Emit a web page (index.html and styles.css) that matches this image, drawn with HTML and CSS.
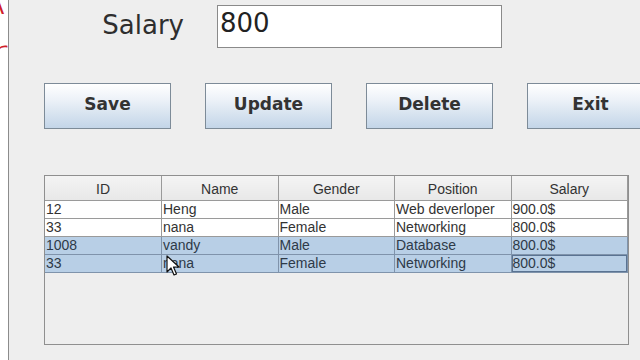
FILE: index.html
```html
<!DOCTYPE html>
<html lang="en">
<head>
    <meta charset="UTF-8">
    <meta name="viewport" content="width=device-width, initial-scale=1.0">
    <title>Employee Form</title>
    <link rel="stylesheet" href="styles.css">
</head>
<body>
    <div class="window">
        <div class="side-strip">
            <span class="ink ink-top">A</span>
            <span class="ink ink-mid">r</span>
        </div>

        <div class="form-panel">
            <div class="field-row">
                <label class="field-label" for="salary">Salary</label>
                <input type="text" id="salary" class="field-input" value="800">
            </div>

            <div class="button-row">
                <button class="action-btn">Save</button>
                <button class="action-btn">Update</button>
                <button class="action-btn">Delete</button>
                <button class="action-btn">Exit</button>
            </div>

            <div class="table-box">
                <table class="emp-table">
                    <thead>
                        <tr>
                            <th>ID</th>
                            <th>Name</th>
                            <th>Gender</th>
                            <th>Position</th>
                            <th>Salary</th>
                        </tr>
                    </thead>
                    <tbody>
                        <tr>
                            <td>12</td>
                            <td>Heng</td>
                            <td>Male</td>
                            <td>Web deverloper</td>
                            <td>900.0$</td>
                        </tr>
                        <tr>
                            <td>33</td>
                            <td>nana</td>
                            <td>Female</td>
                            <td>Networking</td>
                            <td>800.0$</td>
                        </tr>
                        <tr class="selected">
                            <td>1008</td>
                            <td>vandy</td>
                            <td>Male</td>
                            <td>Database</td>
                            <td>800.0$</td>
                        </tr>
                        <tr class="selected">
                            <td>33</td>
                            <td>nana</td>
                            <td>Female</td>
                            <td>Networking</td>
                            <td class="focused">800.0$</td>
                        </tr>
                    </tbody>
                </table>
            </div>
        </div>

        <!-- mouse pointer over the last row -->
        <svg class="cursor" width="14" height="22" viewBox="0 0 14 22">
            <path d="M1 1 L1 17 L5 13 L8 20 L10.5 19 L7.5 12 L13 12 Z" fill="#ffffff" stroke="#111111" stroke-width="1.2" stroke-linejoin="round"/>
        </svg>
    </div>
</body>
</html>
```

FILE: styles.css
```css
body {
    margin: 0;
    padding: 0;
    background-color: #eeeeee;
    font-family: 'DejaVu Sans', 'Open Sans', sans-serif;
    overflow: hidden;
}

.window {
    position: relative;
    display: flex;
    width: 640px;
    height: 360px;
}

.side-strip {
    flex: none;
    width: 8px;
    height: 100%;
    background-color: #ffffff;
    border-right: 1px solid #8c8c8c;
    overflow: hidden;
    display: flex;
    flex-direction: column;
}

.ink {
    color: #d0202a;
    font-family: 'DejaVu Sans', sans-serif;
    font-weight: 300;
    font-size: 40px;
    line-height: 1;
    white-space: nowrap;
}

.ink-top {
    margin-top: -20px;
    margin-left: -22px;
}

.ink-mid {
    margin-top: 14px;
    margin-left: -9px;
}

.form-panel {
    flex: 1;
    min-width: 0;
    padding: 4px 0 0 35px;
}

.field-row {
    display: flex;
    align-items: center;
    height: 44px;
}

.field-label {
    width: 140px;
    text-align: right;
    font-size: 26px;
    color: #2e2e2e;
    margin-right: 33px;
    padding-bottom: 2px;
}

.field-input {
    width: 285px;
    height: 43px;
    box-sizing: border-box;
    border: 1px solid #8a8a8a;
    background-color: #ffffff;
    font-family: 'DejaVu Sans', sans-serif;
    font-size: 26px;
    color: #222222;
    padding: 0 0 6px 2px;
    outline: none;
}

.button-row {
    display: flex;
    gap: 34px;
    margin-top: 35px;
}

.action-btn {
    flex: none;
    width: 127px;
    height: 46px;
    border: 1px solid #7d8b98;
    border-radius: 0;
    background: linear-gradient(to bottom, #ffffff 0%, #edf2f8 35%, #c3d5e8 100%);
    font-family: 'DejaVu Sans', sans-serif;
    font-weight: 700;
    font-size: 17px;
    color: #333333;
    padding: 0 0 4px 0;
}

.table-box {
    margin-top: 46px;
    width: 583px;
    height: 168px;
    border: 1px solid #8f8f8f;
    background-color: #eeeeee;
}

.emp-table {
    border-collapse: collapse;
    table-layout: fixed;
    width: 583px;
    font-family: 'Liberation Sans', Arial, sans-serif;
    font-size: 14px;
    color: #333333;
}

.emp-table th {
    height: 23px;
    font-weight: 400;
    background: linear-gradient(to bottom, #f4f4f4, #e8e8e8);
    border-right: 1px solid #9a9a9a;
    border-bottom: 1px solid #9a9a9a;
    text-align: center;
    padding: 1px 0 0 0;
}

.emp-table td {
    height: 17px;
    padding: 0 0 0 1px;
    border: 1px solid #9a9a9a;
    border-top: none;
    border-left: none;
    background-color: #ffffff;
    white-space: nowrap;
    overflow: hidden;
    line-height: 17px;
}

.emp-table tr.selected td {
    background-color: #b8cfe6;
    border-color: #7f93ab;
    color: #2e3a48;
}

.emp-table td.focused {
    box-shadow: inset 0 0 0 1px #5a7392;
}

.cursor {
    position: absolute;
    left: 166px;
    top: 255px;
}
```
